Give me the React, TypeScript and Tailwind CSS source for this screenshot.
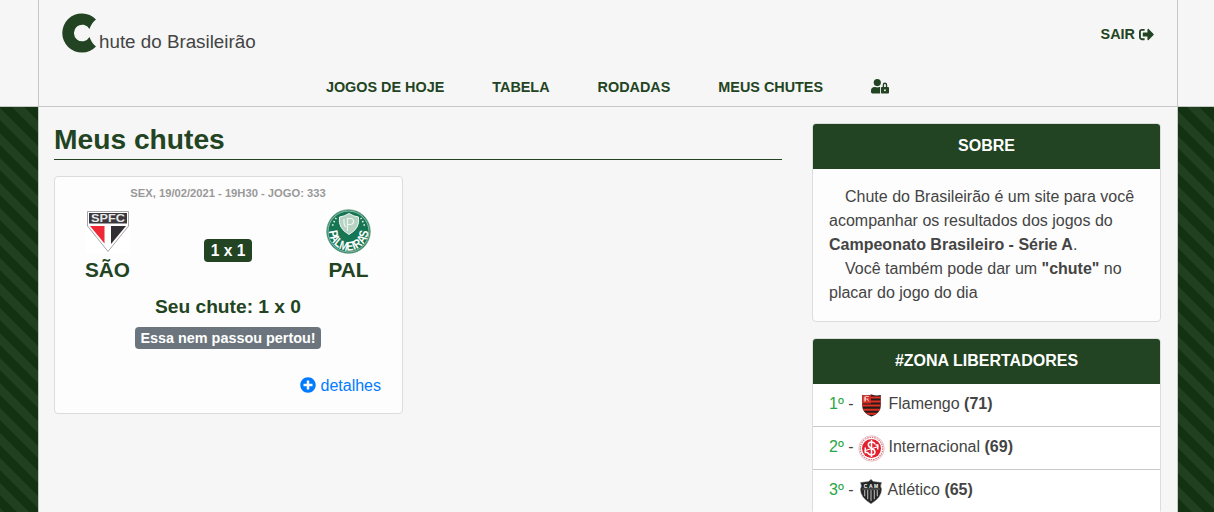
import React from "react";
import { FaPlusCircle, FaSignOutAlt, FaUserLock } from "react-icons/fa";

const Logo = () => (
  <svg className="block h-[40px] w-[35px] overflow-visible" viewBox="0 0 35 40">
    <path
      d="M34 6.6A19.5 19.6 0 1 0 34 33.4Q29.8 30.4 27.5 24A8.3 8.3 0 1 1 27.5 16Q29.8 9.6 34 6.6Z"
      fill="#224422"
    />
  </svg>
);

const SaoPaulo = () => (
  <svg className="block h-[45px] w-[45px] self-start" viewBox="0 0 45 45">
    <path d="M0 0H45V45H0Z" fill="#fff" />
    <path d="M2.5 2.5H43.5V17L23 42.5L2.5 17Z" fill="#fff" stroke="#a5a5a5" strokeWidth="1" />
    <path d="M4 4H42V14.5H4Z" fill="#3b393d" />
    <path d="M5 17H19.5V34.5Z" fill="#ee2836" />
    <path d="M26 17H41L26 35Z" fill="#302e32" />
    <text x="23" y="13.2" textAnchor="middle" textLength="34" lengthAdjust="spacingAndGlyphs" fontSize="11" fontWeight="700" fill="#e8e8e8" fontFamily="Liberation Sans, sans-serif">SPFC</text>
  </svg>
);

const Palmeiras = () => (
  <svg className="block h-[45px] w-[45px] self-start" viewBox="0 0 45 45">
    <path d="M0 0H45V45H0Z" fill="#fff" />
    <circle cx="22.5" cy="22.5" r="21.8" fill="#167552" stroke="#5fa084" strokeWidth="0.8" />
    <circle cx="22.5" cy="22.5" r="20.5" fill="none" stroke="#b9d6c9" strokeWidth="0.8" />
    <path d="M13.5 8Q18 7.5 23 4.5Q28 7.5 32.5 8Q34.5 19 23 25.5Q11.5 19 13.5 8Z" fill="#b5d2c3" stroke="#eef6f2" strokeWidth="1" />
    <path d="M21.5 22V9.5H24Q27.5 9.5 27.5 12.5T24 15.5H22M18 10V14Q18 17 20 18" fill="none" stroke="#eef6f2" strokeWidth="1.2" />
    <path d="M10.2 8.8L7.2 14.5L6.2 18M34.8 8.8L37.8 14.5L38.8 18" fill="none" stroke="#dcece4" strokeWidth="1.6" strokeDasharray="1.5 2.1" />
    <path id="palmeiras-arc" d="M3 20A19.6 19.6 0 1 0 42 20" fill="none" />
    <text fontSize="12.5" fontWeight="700" fill="#fff" fontFamily="Liberation Sans, sans-serif">
      <textPath href="#palmeiras-arc" startOffset="2" textLength="61" lengthAdjust="spacingAndGlyphs">PALMEIRAS</textPath>
    </text>
  </svg>
);

const Flamengo = () => (
  <svg className="block h-[27px] w-[27px]" viewBox="0 0 27 27">
    <clipPath id="fla"><path d="M4.2 3Q9 4 13.5 2.5Q18 4 22.8 3V14Q22.8 21 13.5 24.5Q4.2 21 4.2 14Z" /></clipPath>
    <g clipPath="url(#fla)">
      <path d="M4 2H23V25H4Z" fill="#251b1b" />
      <path d="M13 5.5H23M4 13.5H23M4 17.7H23M4 21.7H23" stroke="#df3023" strokeWidth="2" />
      <path d="M13 9.5H23" stroke="#df3023" strokeWidth="2" />
      <path d="M4 2H13V11.5H4Z" fill="#d62b22" />
      <path d="M6.3 4.5V9.5M6.3 7H10.5M11 4.5H7.5V9.5M11 9.5L9 7" fill="none" stroke="#f6d9d7" strokeWidth="0.8" />
    </g>
  </svg>
);

const Inter = () => (
  <svg className="block h-[27px] w-[27px]" viewBox="0 0 27 27">
    <circle cx="13.5" cy="13.5" r="12.7" fill="#fff" stroke="#dda3a7" strokeWidth="0.7" />
    <circle cx="13.5" cy="13.5" r="11.2" fill="none" stroke="#dc7780" strokeWidth="1.2" strokeDasharray="1.5 0.9" />
    <circle cx="13.5" cy="13.5" r="9.5" fill="#e21f2d" />
    <path d="M17.2 9.2Q16.2 7 13.5 7Q10.3 7 10.3 9.8Q10.3 12 13.5 13.2Q17 14.6 17 17Q17 19.8 13.5 19.8Q10.3 19.8 9.5 17.2M13.5 4.8V22M7.3 12.5V17.5H9.5M19.7 14.5V10H17.5" fill="none" stroke="#fff" strokeWidth="1.5" />
    <path d="M6.5 15.8L20.5 11.5" stroke="#fff" strokeWidth="1.1" />
  </svg>
);

const Atletico = () => (
  <svg className="block h-[27px] w-[26px]" viewBox="0 0 27 27">
    <path d="M13.5 .8L15.8 3.2L24.5 4.2Q22.5 8 24.5 11Q24.5 20 13.5 26.2Q2.5 20 2.5 11Q4.5 8 2.5 4.2L11.2 3.2Z" fill="#242424" stroke="#777" strokeWidth="0.5" />
    <path d="M7 12V18.5M10.1 12V21.5M13.5 12V23.3M16.9 12V21.5M20 12V18.5" stroke="#ccc" strokeWidth="1" />
    <path d="M4.2 11H22.8" stroke="#999" strokeWidth="0.6" />
    <text x="13.5" y="9.5" textAnchor="middle" textLength="15" fontSize="5.2" fontWeight="700" fill="#fff" fontFamily="Liberation Sans, sans-serif">CAM</text>
  </svg>
);

const teams = [
  { pos: "1º", name: "Flamengo", pts: "(71)", Crest: Flamengo },
  { pos: "2º", name: "Internacional", pts: "(69)", Crest: Inter },
  { pos: "3º", name: "Atlético", pts: "(65)", Crest: Atletico },
];

const Panel = ({ title, children }: { title: string; children: React.ReactNode }) => (
  <section className="overflow-hidden rounded-[4px] border border-[#dcdcdc] bg-[#fdfdfd]">
    <h2 className="flex h-[45px] items-center justify-center bg-[#224422] pb-px font-bold text-white">{title}</h2>
    {children}
  </section>
);

export default function App() {
  return (
    <div className="flex h-[512px] flex-col overflow-hidden bg-[#204020] font-['Liberation_Sans',Arial,sans-serif] text-base leading-6 text-[#444]">
      <header className="h-[107px] shrink-0 border-b border-[#c8c8c8] bg-[#f6f6f6]">
        <div className="ml-[38px] flex h-full w-[1140px] flex-col border-x border-[#c8c8c8] font-bold text-[#224422]">
          <div className="flex h-[68px] justify-between pr-[23px] pl-[23px]">
            <div className="flex pt-[13px]">
              <Logo />
              <span className="pt-[17px] pl-[2px] text-[18.8px] font-normal text-[#444]">hute do Brasileirão</span>
            </div>
            <a className="flex h-[68px] items-center gap-1 text-[14.4px]">
              SAIR <FaSignOutAlt className="size-[15px]" />
            </a>
          </div>
          <nav className="flex h-[38px] items-center justify-center gap-12 pr-px text-[14.4px]">
            <a>JOGOS DE HOJE</a>
            <a>TABELA</a>
            <a>RODADAS</a>
            <a>MEUS CHUTES</a>
            <FaUserLock className="mb-px h-[14.4px] w-[18px]" />
          </nav>
        </div>
      </header>
      <div className="flex-1 bg-[linear-gradient(45deg,#123212_25%,#204020_25%,#204020_50%,#123212_50%,#123212_75%,#204020_75%)] bg-[length:25px_25px] bg-[position:0_0.5px]">
        <main className="ml-[38px] flex h-full w-[1140px] justify-between border-x border-[#c8c8c8] bg-[#f6f6f6] pr-4 pl-[15px]">
          <div className="w-[728px]">
            <h1 className="mt-[15px] h-[38px] border-b border-[#224422] text-[28.2px] leading-[35px] font-bold text-[#224422]">Meus chutes</h1>
            <article className="mt-4 h-[238px] w-[349px] rounded-[4px] border border-[#dcdcdc] bg-[#fdfdfd] pr-px font-bold text-[#224422]">
              <p className="mt-1 text-center text-[11.2px] leading-6 text-[#999]">SEX, 19/02/2021 - 19H30 - JOGO: 333</p>
              <div className="mt-1 flex justify-between px-[30px]">
                <div className="flex w-[45px] flex-col items-center">
                  <SaoPaulo />
                  <span className="mt-[2px] text-[20.8px] leading-7">SÃO</span>
                </div>
                <span className="mt-[30px] flex h-[23.4px] items-center rounded-[4px] bg-[#224422] px-[6.24px] text-[15.6px] text-white">1 x 1</span>
                <div className="flex w-[45px] flex-col items-center">
                  <Palmeiras />
                  <span className="mt-[2px] text-[20.8px] leading-7">PAL</span>
                </div>
              </div>
              <p className="mt-[9px] text-center text-[19.2px] leading-7">Seu chute: 1 x 0</p>
              <div className="mt-[6px] flex justify-center">
                <span className="flex h-[21.6px] items-center rounded-[4px] bg-[#6c757d] px-[5.76px] text-[14.4px] text-white">Essa nem passou pertou!</span>
              </div>
              <a className="mt-[25px] mr-5 flex items-center justify-end gap-[5px] font-normal text-[#007bff]">
                <FaPlusCircle className="mb-px size-4" />
                detalhes
              </a>
            </article>
          </div>
          <aside className="mt-4 flex w-[349px] flex-col gap-4">
            <Panel title="SOBRE">
              <div className="h-[152px] p-4">
                <p className="indent-4">
                  Chute do Brasileirão é um site para você acompanhar os resultados dos jogos do <b>Campeonato Brasileiro - Série A</b>.
                </p>
                <p className="indent-4">
                  Você também pode dar um <b>"chute"</b> no placar do jogo do dia
                </p>
              </div>
            </Panel>
            <Panel title="#ZONA LIBERTADORES">
              <ul className="bg-white">
                {teams.map(({ pos, name, pts, Crest }) => (
                  <li key={name} className="flex h-[43px] items-center border-b border-[#c8c8c8] px-4 pb-[3px]">
                    <span className="text-[#28a745]">{pos}</span>
                    <span className="mr-[4.4px] ml-[4.4px]">-</span>
                    <span className="mt-[3px] mr-[3.6px]"><Crest /></span>
                    <span>{name} <b>{pts}</b></span>
                  </li>
                ))}
              </ul>
            </Panel>
          </aside>
        </main>
      </div>
    </div>
  );
}
